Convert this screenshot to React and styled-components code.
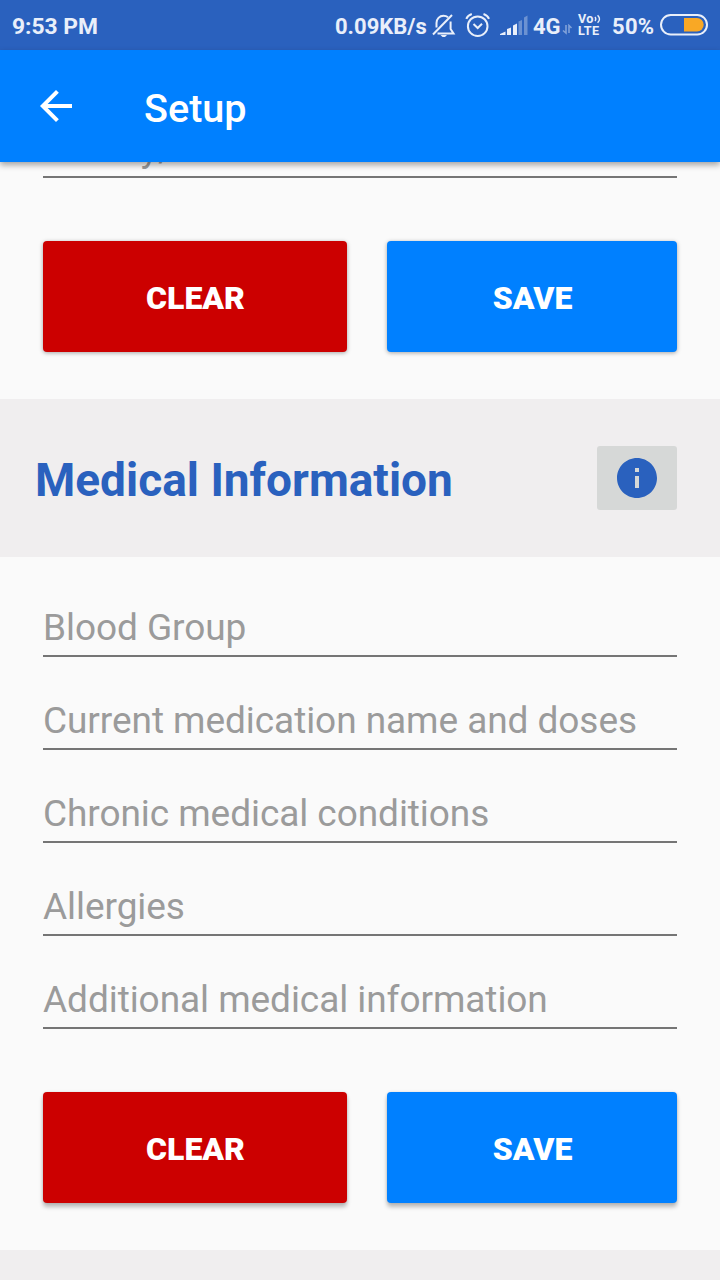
import React from 'react';
import styled, { createGlobalStyle } from 'styled-components';

const Global = createGlobalStyle`
  * { box-sizing: border-box; }
  body { margin: 0; background: #fafafa; font-family: Roboto, sans-serif; }
`;

const Screen = styled.div`
  width: 720px;
  height: 1280px;
  overflow: hidden;
  display: flex;
  flex-direction: column;
  background: #fafafa;
`;

const StatusBar = styled.header`
  flex: none;
  height: 50px;
  padding: 3px 12px 0;
  display: flex;
  align-items: center;
  background: #2a61be;
  color: #e9effa;
  font-size: 22.8px;
  font-weight: 700;
  line-height: 30px;
  svg { display: block; flex: none; }
`;

const Clock = styled.span`
  flex: 1;
`;

const StatusText = styled.span`
  width: ${(p) => p.$width}px;
  margin-left: ${(p) => p.$gap || 0}px;
  font-size: 22px;
  letter-spacing: ${(p) => p.$spacing || 0}px;
  white-space: nowrap;
`;

const StatusIcon = styled.svg.attrs({ fill: 'none', stroke: 'currentColor' })`
  margin: -3px 0 0 ${(p) => p.$gap}px;
`;

const Volte = styled.span`
  display: flex;
  flex-direction: column;
  width: 23px;
  margin: -3px 0 0 6px;
  font-size: 12.6px;
  line-height: 12px;
`;

const VolteRow = styled.span`
  display: flex;
  height: 12px;
  letter-spacing: ${(p) => p.$spacing || 0}px;
`;

const AppBar = styled.nav`
  flex: none;
  position: relative;
  height: 112px;
  padding: 4px 40px 0;
  display: flex;
  align-items: center;
  gap: 72px;
  background: #0080ff;
  color: #fff;
  box-shadow: 0 3px 6px rgba(0, 0, 0, 0.35);
  svg { display: block; margin-top: -4px; }
`;

const Title = styled.h1`
  margin: 2px 0 0;
  font-size: 39.6px;
  font-weight: 500;
  line-height: 48px;
`;

const Content = styled.main`
  display: flex;
  flex-direction: column;
`;

const Form = styled.section`
  display: flex;
  flex-direction: column;
  padding: 0 43px 47px;
  margin-top: ${(p) => p.$offset || 0}px;
`;

const Field = styled.div`
  height: ${(p) => p.$height || 93}px;
  display: flex;
  align-items: flex-end;
  padding-bottom: 5px;
  border-bottom: 2px solid #757575;
  color: #9b9b9b;
  font-size: 37px;
  letter-spacing: -0.06px;
  line-height: 44px;
  white-space: nowrap;
`;

const Actions = styled.div`
  display: grid;
  grid-template-columns: 304px 290px;
  gap: 40px;
  margin-top: 63px;
`;

const Button = styled.button`
  height: 111px;
  padding: 2px 0 0 1px;
  border: 0;
  border-radius: 4px;
  background: ${(p) => (p.$danger ? '#cc0000' : '#0080ff')};
  color: #fff;
  font: 900 32px/38px Roboto, sans-serif;
  box-shadow: ${(p) => (p.$raised
    ? '0 4px 4px rgba(0, 0, 0, 0.26), 0 0 3px rgba(0, 0, 0, 0.12)'
    : '0 1px 4px rgba(0, 0, 0, 0.34)')};
`;

const SectionHeader = styled.header`
  height: 158px;
  padding: 0 43px 0 35px;
  display: flex;
  align-items: center;
  justify-content: space-between;
  background: #f0eeef;
`;

const SectionTitle = styled.h2`
  margin: 4px 0 0;
  color: #2a61be;
  font-size: 46px;
  font-weight: 700;
  line-height: 54px;
`;

const InfoButton = styled.button`
  width: 80px;
  height: 64px;
  padding: 0;
  display: grid;
  place-items: center;
  border: 0;
  border-radius: 3px;
  background: #d6d8d7;
`;

function SaveActions({ raised }) {
  return (
    <Actions>
      <Button $danger $raised={raised}>CLEAR</Button>
      <Button $raised={raised}>SAVE</Button>
    </Actions>
  );
}

const medicalFields = [
  'Blood Group',
  'Current medication name and doses',
  'Chronic medical conditions',
  'Allergies',
  'Additional medical information',
];

function Status() {
  return (
    <StatusBar>
      <Clock>9:53 PM</Clock>
      <StatusText $width={93}>0.09KB/s</StatusText>
      <StatusIcon $gap={4} width="24" height="24" viewBox="0 0 24 24" strokeWidth="2">
        <path d="M4.5 14.5V10C4.5 6 7.5 2.8 11.5 2.8C13.3 2.8 14.8 3.3 16 4.3M18.6 8.5V16L21.5 20.4H5.5M1 21.5L20 2" />
        <path d="M8.5 22H15L13 24H10.5Z" fill="currentColor" stroke="none" />
      </StatusIcon>
      <StatusIcon $gap={9} width="26" height="26" viewBox="0 0 26 26" strokeWidth="2">
        <circle cx="12.7" cy="14.2" r="9.8" />
        <path d="M8.5 12L12.7 16L17 11.8M1.3 6.8Q2.5 3.4 6.8 2M18.5 2Q22.8 3.4 24 6.8" />
      </StatusIcon>
      <StatusIcon $gap={9} width="28" height="22" viewBox="0 0 28 22">
        <path fill="currentColor" stroke="none" d="M0 21V20L5.5 17.5V21ZM7 21V15L11 13.5V21ZM13 21V11.5L17 9.5V21Z" />
        <path fill="currentColor" stroke="none" opacity=".35" d="M18.5 21V7.5L22 6V21ZM24 21V3.5L27.5 1.5V21Z" />
      </StatusIcon>
      <StatusText $width={28} $gap={5}>4G</StatusText>
      <svg width="11" height="12" viewBox="0 0 11 12" fill="none" stroke="currentColor" opacity=".45" transform="translate(1 3)">
        <path strokeWidth="1.6" d="M4 1V9L1 6.5M7 9V1.5L9.5 4" />
      </svg>
      <Volte>
        <VolteRow $spacing={0.3}>
          Vo
          <svg width="8" height="11" viewBox="0 0 8 11" fill="none" stroke="currentColor" strokeWidth="1.4">
            <path d="M1 4Q2.6 6 1 8M3.6 2.2Q7.4 6 3.6 9.8" />
          </svg>
        </VolteRow>
        <VolteRow $spacing={0.4}>LTE</VolteRow>
      </Volte>
      <StatusText $width={42} $gap={11} $spacing={0.3}>50%</StatusText>
      <StatusIcon $gap={6} width="48" height="22" viewBox="0 0 48 22">
        <rect x="1" y="1" width="46" height="19.5" rx="9.75" strokeWidth="2" />
        <path fill="#f9a825" stroke="none" d="M24 4H37A6.7 6.7 0 0 1 37 17.4H24Z" />
      </StatusIcon>
    </StatusBar>
  );
}

export default function App() {
  return (
    <Screen>
      <Global />
      <Status />
      <AppBar>
        <svg width="32" height="32" viewBox="4 4 16 16" fill="currentColor">
          <path d="M20 11H7.83l5.59-5.59L12 4l-8 8 8 8 1.41-1.41L7.83 13H20v-2z" />
        </svg>
        <Title>Setup</Title>
      </AppBar>
      <Content>
        <Form>
          <Field $height={16}>County/State</Field>
          <SaveActions />
        </Form>
        <SectionHeader>
          <SectionTitle>Medical Information</SectionTitle>
          <InfoButton aria-label="Information">
            <svg width="40" height="40" viewBox="2 2 20 20" fill="#2a61be">
              <path d="M12 2C6.48 2 2 6.48 2 12s4.48 10 10 10 10-4.48 10-10S17.52 2 12 2zm1 15h-2v-6h2v6zm0-8h-2V7h2v2z" />
            </svg>
          </InfoButton>
        </SectionHeader>
        <Form $offset={7}>
          {medicalFields.map((label) => <Field key={label}>{label}</Field>)}
          <SaveActions raised />
        </Form>
        <SectionHeader />
      </Content>
    </Screen>
  );
}
